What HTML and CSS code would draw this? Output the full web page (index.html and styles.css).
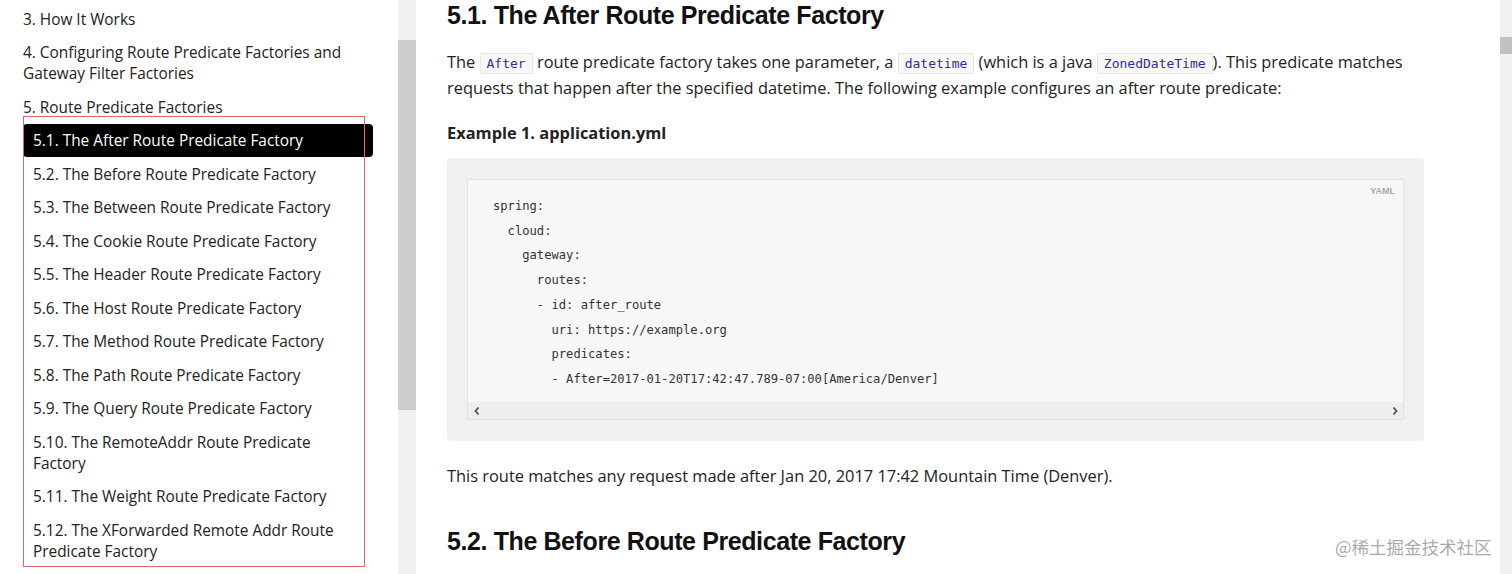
FILE: index.html
```html
<!DOCTYPE html>
<html lang="en">
<head>
<meta charset="utf-8">
<title>Route Predicate Factories</title>
<link rel="stylesheet" href="styles.css">
</head>
<body>
<div class="app">
  <aside class="toc">
    <ul class="toc-list">
      <li class="toc-item">3. How It Works</li>
      <li class="toc-item">4. Configuring Route Predicate Factories and Gateway Filter Factories</li>
      <li class="toc-item">5. Route Predicate Factories
        <ul class="toc-sub">
          <li class="sub-item active">5.1. The After Route Predicate Factory</li>
          <li class="sub-item">5.2. The Before Route Predicate Factory</li>
          <li class="sub-item">5.3. The Between Route Predicate Factory</li>
          <li class="sub-item">5.4. The Cookie Route Predicate Factory</li>
          <li class="sub-item">5.5. The Header Route Predicate Factory</li>
          <li class="sub-item">5.6. The Host Route Predicate Factory</li>
          <li class="sub-item">5.7. The Method Route Predicate Factory</li>
          <li class="sub-item">5.8. The Path Route Predicate Factory</li>
          <li class="sub-item">5.9. The Query Route Predicate Factory</li>
          <li class="sub-item">5.10. The RemoteAddr Route Predicate Factory</li>
          <li class="sub-item">5.11. The Weight Route Predicate Factory</li>
          <li class="sub-item">5.12. The XForwarded Remote Addr Route Predicate Factory</li>
        </ul>
      </li>
    </ul>
    <div class="annotation"></div>
  </aside>
  <div class="toc-scroll"><div class="toc-thumb"></div></div>
  <main class="content">
    <h2 class="heading">5.1. The After Route Predicate Factory</h2>
    <p class="para">The <code class="ic">After</code> route predicate factory takes one parameter, a <code class="ic">datetime</code> (which is a java <code class="ic">ZonedDateTime</code>). This predicate matches requests that happen after the specified datetime. The following example configures an after route predicate:</p>
    <div class="example-title">Example 1. application.yml</div>
    <div class="listing">
      <div class="pre-box">
        <span class="lang">YAML</span>
        <pre class="code">spring:
  cloud:
    gateway:
      routes:
      - id: after_route
        uri: https://example.org
        predicates:
        - After=2017-01-20T17:42:47.789-07:00[America/Denver]</pre>
        <div class="hscroll">
          <svg class="arrow" width="8" height="10" viewBox="0 0 8 10"><path d="M5.5 1.5 L2.5 5 L5.5 8.5" fill="none" stroke="#505050" stroke-width="1.8"/></svg>
          <svg class="arrow" width="8" height="10" viewBox="0 0 8 10"><path d="M2.5 1.5 L5.5 5 L2.5 8.5" fill="none" stroke="#505050" stroke-width="1.8"/></svg>
        </div>
      </div>
    </div>
    <p class="para after">This route matches any request made after Jan 20, 2017 17:42 Mountain Time (Denver).</p>
    <h2 class="heading next">5.2. The Before Route Predicate Factory</h2>
  </main>
  <div class="page-scroll"><div class="page-thumb"></div></div>
</div>
<div class="watermark">@稀土掘金技术社区</div>
</body>
</html>
```

FILE: styles.css
```css
* { box-sizing: border-box; }
html, body { margin: 0; padding: 0; }
body {
  width: 1512px;
  height: 574px;
  overflow: hidden;
  background: #fff;
  font-family: "Open Sans", "Noto Sans", sans-serif;
  color: #222;
  position: relative;
}
.app {
  display: flex;
  height: 574px;
}
.toc {
  width: 398px;
  flex: none;
  position: relative;
  padding: 8.5px 0 0 23px;
}
.toc-list {
  list-style: none;
  margin: 0;
  padding: 0;
  width: 350px;
  display: flex;
  flex-direction: column;
  gap: 12.5px;
  font-size: 15.4px;
  line-height: 21px;
  color: #222;
}
.toc-item { padding-right: 0; }
.toc-sub {
  list-style: none;
  margin: 6.5px 0 0;
  padding: 0;
  display: flex;
  flex-direction: column;
  gap: 0.5px;
}
.sub-item {
  padding: 6px 20px 6px 10px;
  border-radius: 4px;
}
.sub-item.active {
  background: #000;
  color: #fff;
}
.annotation {
  position: absolute;
  left: 23px;
  top: 116px;
  width: 342px;
  height: 451px;
  border: 1px solid #e2676a;
  pointer-events: none;
}
.toc-scroll {
  width: 18px;
  flex: none;
  background: #f1f1f1;
  padding-top: 40px;
}
.toc-thumb {
  height: 370px;
  background: #cdcdcd;
}
.content {
  flex: none;
  width: 1084px;
  padding-left: 31px;
}
.heading {
  margin: 0;
  font-family: "Liberation Sans", Arial, sans-serif;
  font-weight: 700;
  font-size: 25px;
  letter-spacing: -0.4px;
  line-height: 30px;
  color: #111;
  height: 30px;
}
.para {
  margin: 19px 0 0;
  width: 977px;
  font-size: 16.4px;
  line-height: 26px;
  color: #222;
}
.ic {
  font-family: "DejaVu Sans Mono", monospace;
  font-size: 13px;
  line-height: 16px;
  color: #2e2e98;
  background: #f7f7f8;
  border: 1px solid #e6e6e8;
  border-radius: 2px;
  padding: 2px 6px;
}
.example-title {
  margin-top: 19px;
  font-weight: 700;
  font-size: 16.4px;
  line-height: 26px;
  color: #222;
}
.listing {
  margin-top: 12px;
  width: 977px;
  background: #f0f0f0;
  border-radius: 4px;
  padding: 21px 20px;
}
.pre-box {
  position: relative;
  background: #f7f7f7;
  border: 1px solid #e3e3e3;
  height: 241px;
  display: flex;
  flex-direction: column;
}
.lang {
  position: absolute;
  top: 6px;
  right: 8px;
  font-family: "Liberation Sans", Arial, sans-serif;
  font-size: 9px;
  font-weight: 700;
  color: #a8a8a8;
}
.code {
  margin: 0;
  flex: 1;
  padding: 14px 25px 0;
  font-family: "DejaVu Sans Mono", monospace;
  font-size: 12.15px;
  line-height: 24.7px;
  color: #333;
  overflow: hidden;
}
.hscroll {
  height: 17px;
  background: #efefef;
  display: flex;
  justify-content: space-between;
  align-items: center;
  padding: 0 4px 0 5px;
}
.arrow { display: block; }
.para.after { margin-top: 22px; }
.heading.next { margin-top: 37px; }
.page-scroll {
  margin-left: auto;
  width: 12px;
  flex: none;
  background: #f1f1f1;
  padding-top: 37px;
}
.page-thumb {
  height: 17px;
  background: #c1c1c1;
}
.watermark {
  position: absolute;
  left: 1335px;
  top: 535px;
  font-family: "Noto Sans CJK SC", sans-serif;
  font-size: 17.5px;
  line-height: 24px;
  color: rgba(140, 140, 140, 0.75);
  white-space: nowrap;
}
```
